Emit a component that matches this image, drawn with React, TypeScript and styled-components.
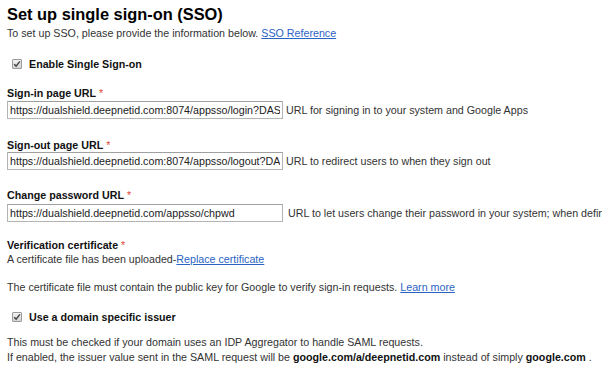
import React from "react";
import styled, { createGlobalStyle } from "styled-components";

const GlobalStyle = createGlobalStyle`
  html, body {
    margin: 0;
    padding: 0;
    background: #fff;
  }
  body {
    font-family: "Liberation Sans", Arial, sans-serif;
    font-size: 10.7px;
    color: #333;
    overflow: hidden;
  }
`;

const Page = styled.div`
  width: 602px;
  height: 367px;
  padding: 3px 0 0 7px;
  box-sizing: border-box;
  overflow: hidden;
  white-space: nowrap;
`;

const Title = styled.h1`
  margin: 0;
  font-size: 16.4px;
  line-height: 22px;
  font-weight: bold;
  color: #000;
`;

const Text = styled.div<{ $top?: number; $lh?: number }>`
  margin-top: ${({ $top }) => $top ?? 0}px;
  line-height: ${({ $lh }) => $lh ?? 14}px;
  color: #333;
`;

const Link = styled.a`
  color: #2a63c4;
  text-decoration: underline;
  cursor: pointer;
`;

const CheckRow = styled.label<{ $top: number }>`
  display: flex;
  align-items: center;
  gap: 7px;
  margin-top: ${({ $top }) => $top}px;
  padding-left: 5px;
  height: 16px;
  font-weight: bold;
  color: #111;
`;

const Box = styled.span`
  width: 8px;
  height: 8px;
  border: 1px solid #9a9a9a;
  border-radius: 1px;
  background: linear-gradient(180deg, #f2f2f2 0%, #d6d6d6 100%);
  display: flex;
  align-items: center;
  justify-content: center;
  box-sizing: content-box;
`;

const Field = styled.div<{ $top: number }>`
  margin-top: ${({ $top }) => $top}px;
`;

const Label = styled.div<{ $gap: number }>`
  font-weight: bold;
  color: #111;
  line-height: 14px;
  margin-bottom: ${({ $gap }) => $gap}px;
`;

const Star = styled.span`
  color: #dd4b39;
  font-weight: normal;
  margin-left: 3px;
`;

const InputRow = styled.div<{ $gap: number }>`
  display: flex;
  align-items: center;
  gap: ${({ $gap }) => $gap}px;
  overflow: hidden;
`;

const Input = styled.input`
  width: 276px;
  height: 18px;
  box-sizing: border-box;
  flex: none;
  border: 1px solid #b4b4b4;
  border-top-color: #a0a0a0;
  padding: 0 2px;
  margin: 0;
  font-family: "Liberation Sans", Arial, sans-serif;
  font-size: 10.7px;
  color: #222;
  background: #fff;
  outline: none;
`;

const Help = styled.span`
  color: #333;
  white-space: nowrap;
`;

const Strong = styled.b`
  color: #111;
`;

function Check() {
  return (
    <Box>
      <svg width="8" height="8" viewBox="0 0 8 8">
        <path
          d="M1.2 4.2 L3.1 6.1 L6.9 1.4"
          fill="none"
          stroke="#444"
          strokeWidth="1.5"
        />
      </svg>
    </Box>
  );
}

const fields = [
  {
    label: "Sign-in page URL",
    value: "https://dualshield.deepnetid.com:8074/appsso/login?DASHBOARD=SSO",
    help: "URL for signing in to your system and Google Apps",
    top: 14,
    gap: 1,
    helpGap: 3,
  },
  {
    label: "Sign-out page URL",
    value: "https://dualshield.deepnetid.com:8074/appsso/logout?DASHBOARD=SSO",
    help: "URL to redirect users to when they sign out",
    top: 19,
    gap: 0,
    helpGap: 3,
  },
  {
    label: "Change password URL",
    value: "https://dualshield.deepnetid.com/appsso/chpwd",
    help: "URL to let users change their password in your system; when defined here, this is shown even when single sign-on is not enabled",
    top: 18,
    gap: 2,
    helpGap: 5,
  },
];

export default function App() {
  return (
    <>
      <GlobalStyle />
      <Page>
        <Title>Set up single sign-on (SSO)</Title>
        <Text $top={1}>
          To set up SSO, please provide the information below.{" "}
          <Link>SSO Reference</Link>
        </Text>

        <CheckRow $top={16}>
          <Check />
          Enable Single Sign-on
        </CheckRow>

        {fields.map((f) => (
          <Field key={f.label} $top={f.top}>
            <Label $gap={f.gap}>
              {f.label}
              <Star>*</Star>
            </Label>
            <InputRow $gap={f.helpGap}>
              <Input defaultValue={f.value} />
              <Help>{f.help}</Help>
            </InputRow>
          </Field>
        ))}

        <Field $top={16}>
          <Label $gap={0}>
            Verification certificate
            <Star>*</Star>
          </Label>
          <Text>
            A certificate file has been uploaded-<Link>Replace certificate</Link>
          </Text>
        </Field>

        <Text $top={14}>
          The certificate file must contain the public key for Google to verify
          sign-in requests. <Link>Learn more</Link>
        </Text>

        <CheckRow $top={15}>
          <Check />
          Use a domain specific issuer
        </CheckRow>

        <Text $top={10} $lh={15}>
          This must be checked if your domain uses an IDP Aggregator to handle
          SAML requests.
        </Text>
        <Text $lh={15}>
          If enabled, the issuer value sent in the SAML request will be{" "}
          <Strong>google.com/a/deepnetid.com</Strong> instead of simply{" "}
          <Strong>google.com</Strong> .
        </Text>
      </Page>
    </>
  );
}
